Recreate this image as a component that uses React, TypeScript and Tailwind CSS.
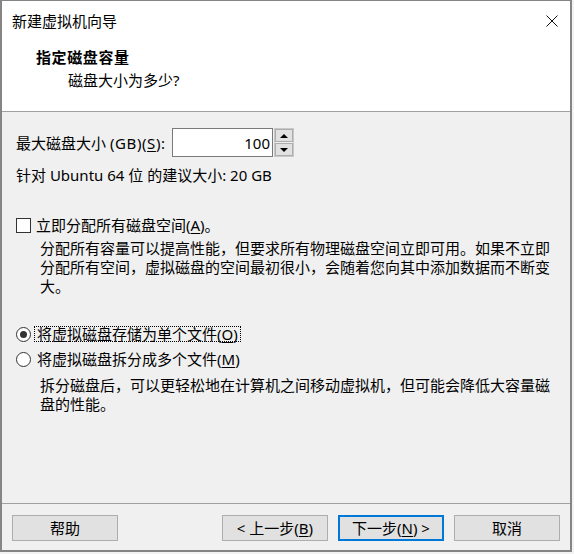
import React from "react";

function U({ children }: { children: React.ReactNode }) {
  return <span className="underline underline-offset-[2px]">{children}</span>;
}

function Btn({ children, primary }: { children: React.ReactNode; primary?: boolean }) {
  return (
    <div
      className={
        "w-[106px] h-[26px] flex items-center justify-center bg-[#e1e1e1] text-black leading-[20px] " +
        (primary ? "border-2 border-[#0078d7]" : "border border-[#adadad]")
      }
    >
      {children}
    </div>
  );
}

export default function App() {
  return (
    <div className="w-[574px] h-[554px] bg-[#f3f3f3] font-['Noto_Sans','Noto_Sans_CJK_SC',sans-serif] text-[15px] text-black">
      <div className="w-[572px] h-[552px] border-l-2 border-r-2 border-b-2 border-t border-[#858585] flex flex-col">
        {/* header */}
        <div className="h-[111px] bg-white border-b border-[#a0a0a0] flex flex-col">
          <div className="h-[40px] flex items-center justify-between pl-[10px] pr-[12px]">
            <span className="leading-[20px]">新建虚拟机向导</span>
            <svg width="12" height="12" viewBox="0 0 12 12">
              <path d="M0.5 0.5 L11.5 11.5 M11.5 0.5 L0.5 11.5" stroke="#111" strokeWidth="1" fill="none" />
            </svg>
          </div>
          <div className="mt-[6px] pl-[34px] leading-[20px] font-bold tracking-[0.6px]">指定磁盘容量</div>
          <div className="mt-[3px] pl-[66px] leading-[20px]">磁盘大小为多少?</div>
        </div>

        {/* body */}
        <div className="flex-1 bg-[#f0f0f0] flex flex-col pl-[14px]">
          <div className="mt-[16px] flex items-center h-[29px]">
            <span className="w-[156px] leading-[20px] whitespace-nowrap">
              最大磁盘大小 <span className="tracking-[0.6px]">(GB)(<U>S</U>):</span>
            </span>
            <div className="w-[101px] h-[29px] border border-[#7a7a7a] bg-white flex items-center justify-end pr-[2px] leading-[20px]">
              100
            </div>
            <div className="ml-[1px] w-[20px] h-[29px] border border-[#c8c8c8] bg-[#f0f0f0] flex flex-col justify-between">
              <div className="h-[13px] border border-[#adadad] bg-[#e1e1e1] flex items-center justify-center">
                <svg width="8" height="4" viewBox="0 0 8 4">
                  <path d="M0 4 L4 0 L8 4 Z" fill="#000" />
                </svg>
              </div>
              <div className="h-[13px] border border-[#adadad] bg-[#e1e1e1] flex items-center justify-center">
                <svg width="8" height="4" viewBox="0 0 8 4">
                  <path d="M0 0 L8 0 L4 4 Z" fill="#000" />
                </svg>
              </div>
            </div>
          </div>

          <div className="mt-[8px] leading-[20px]">针对 Ubuntu 64 位 的建议大小: 20 GB</div>

          <div className="mt-[30px] flex items-center h-[20px]">
            <div className="w-[15px] h-[15px] border border-[#333] bg-white" />
            <span className="ml-[5px] leading-[20px]">
              立即分配所有磁盘空间(<U>A</U>)。
            </span>
          </div>

          <div className="mt-[4px] pl-[24px] leading-[19px] whitespace-nowrap">
            <div>分配所有容量可以提高性能，但要求所有物理磁盘空间立即可用。如果不立即</div>
            <div>分配所有空间，虚拟磁盘的空间最初很小，会随着您向其中添加数据而不断变</div>
            <div>大。</div>
          </div>

          <div className="mt-[28px] flex items-center h-[20px]">
            <div className="w-[15px] h-[15px] rounded-full border border-[#333] bg-white flex items-center justify-center">
              <div className="w-[7px] h-[7px] rounded-full bg-[#333]" />
            </div>
            <span className="ml-[3px] px-[2px] leading-[14px] border border-dotted border-black">
              将虚拟磁盘存储为单个文件(<U>O</U>)
            </span>
          </div>

          <div className="mt-[5px] flex items-center h-[20px]">
            <div className="w-[15px] h-[15px] rounded-full border border-[#333] bg-white" />
            <span className="ml-[6px] leading-[20px]">
              将虚拟磁盘拆分成多个文件(<U>M</U>)
            </span>
          </div>

          <div className="mt-[7px] pl-[24px] leading-[19px] whitespace-nowrap">
            <div>拆分磁盘后，可以更轻松地在计算机之间移动虚拟机，但可能会降低大容量磁</div>
            <div>盘的性能。</div>
          </div>
        </div>

        {/* footer */}
        <div className="h-[47px] bg-[#f0f0f0] border-t border-[#a0a0a0] flex items-start pt-[11px] px-[10px]">
          <Btn>帮助</Btn>
          <div className="flex-1" />
          <div className="flex gap-[10px]">
            <Btn>
              &lt; 上一步(<U>B</U>)
            </Btn>
            <Btn primary>
              下一步(<U>N</U>) &gt;
            </Btn>
            <Btn>取消</Btn>
          </div>
        </div>
      </div>
    </div>
  );
}
